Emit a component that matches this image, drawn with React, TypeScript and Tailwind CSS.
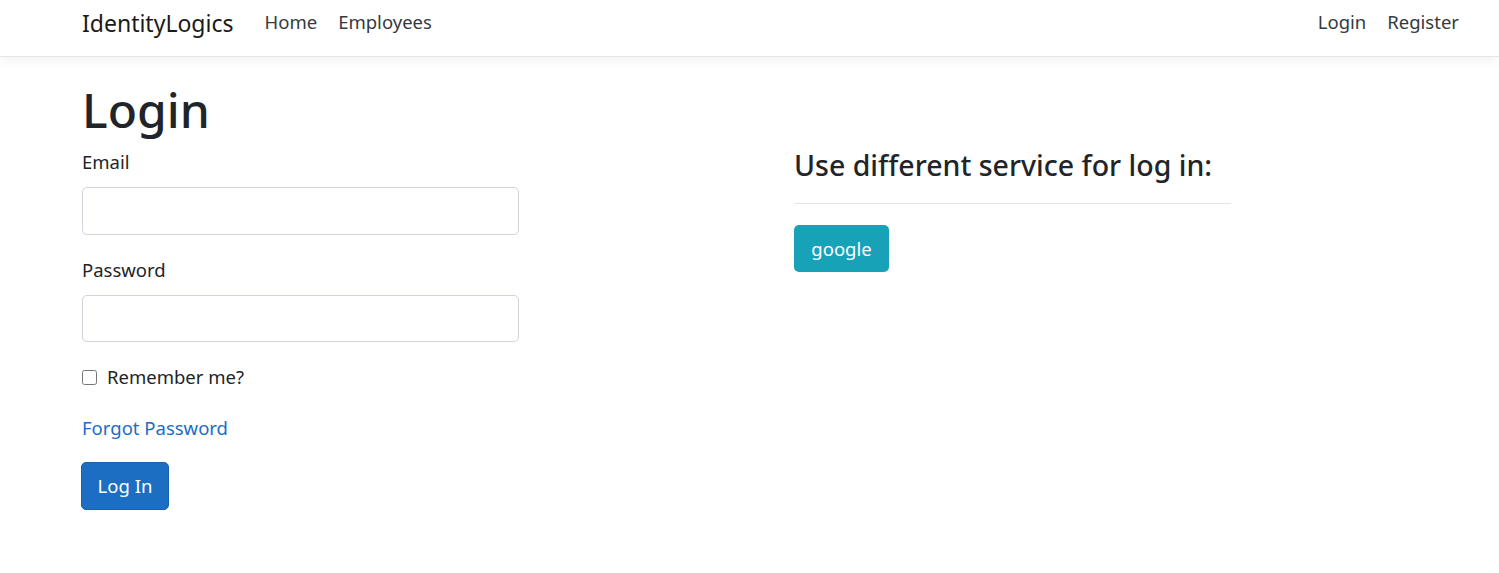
export default function App() {
  return (
    <div className="min-h-screen bg-white text-[#212529] font-['Segoe_UI','Noto_Sans',sans-serif]">
      {/* navbar */}
      <nav className="relative z-10 h-[57px] bg-white border-b border-[#e5e5e5] shadow-[0_4px_12px_rgba(0,0,0,0.05)] flex items-start pt-[7px] pl-[82px] pr-[40px]">
        <span className="mt-[1px] text-[23px] leading-[30px] text-[#1a1a1a] mr-[31px]">IdentityLogics</span>
        <div className="flex gap-[21px] text-[18.5px] leading-[30px] text-[#343a40]">
          <span>Home</span>
          <span>Employees</span>
        </div>
        <div className="ml-auto flex gap-[21px] text-[18.5px] leading-[30px] text-[#343a40]">
          <span>Login</span>
          <span>Register</span>
        </div>
      </nav>

      {/* main */}
      <main className="pl-[82px] flex">
        <section className="w-[437px]">
          <h1 className="mt-[23px] mb-[7px] text-[48px] leading-[60px] font-medium">Login</h1>
          <label className="block text-[18.5px] leading-[30px] mb-[10px]">Email</label>
          <input className="block w-full h-[48px] border border-[#ced4da] rounded-[5px] mb-[20px]" />
          <label className="block text-[18.5px] leading-[30px] mb-[10px]">Password</label>
          <input type="password" className="block w-full h-[47px] border border-[#ced4da] rounded-[5px] mb-[20px]" />
          <div className="flex items-center h-[30px] mb-[21px] text-[18.5px]">
            <input type="checkbox" className="w-[15px] h-[15px] mr-[10px]" />
            <span>Remember me?</span>
          </div>
          <a className="block text-[18.5px] leading-[30px] text-[#1b6ec2] mb-[19px]">Forgot Password</a>
          <button className="-ml-px w-[88px] h-[48px] rounded-[5px] bg-[#1b6ec2] border border-[#1861ac] text-white text-[18.5px]">
            Log In
          </button>
        </section>

        <section className="ml-[275px] w-[437px]">
          <h4 className="mt-[91px] text-[28.5px] leading-[34px] font-medium">Use different service for log in:</h4>
          <hr className="mt-[21px] border-0 border-t border-[#e5e5e5]" />
          <button className="mt-[21px] w-[95px] h-[47px] rounded-[5px] bg-[#17a2b8] text-white text-[18.5px]">
            google
          </button>
        </section>
      </main>
    </div>
  );
}
